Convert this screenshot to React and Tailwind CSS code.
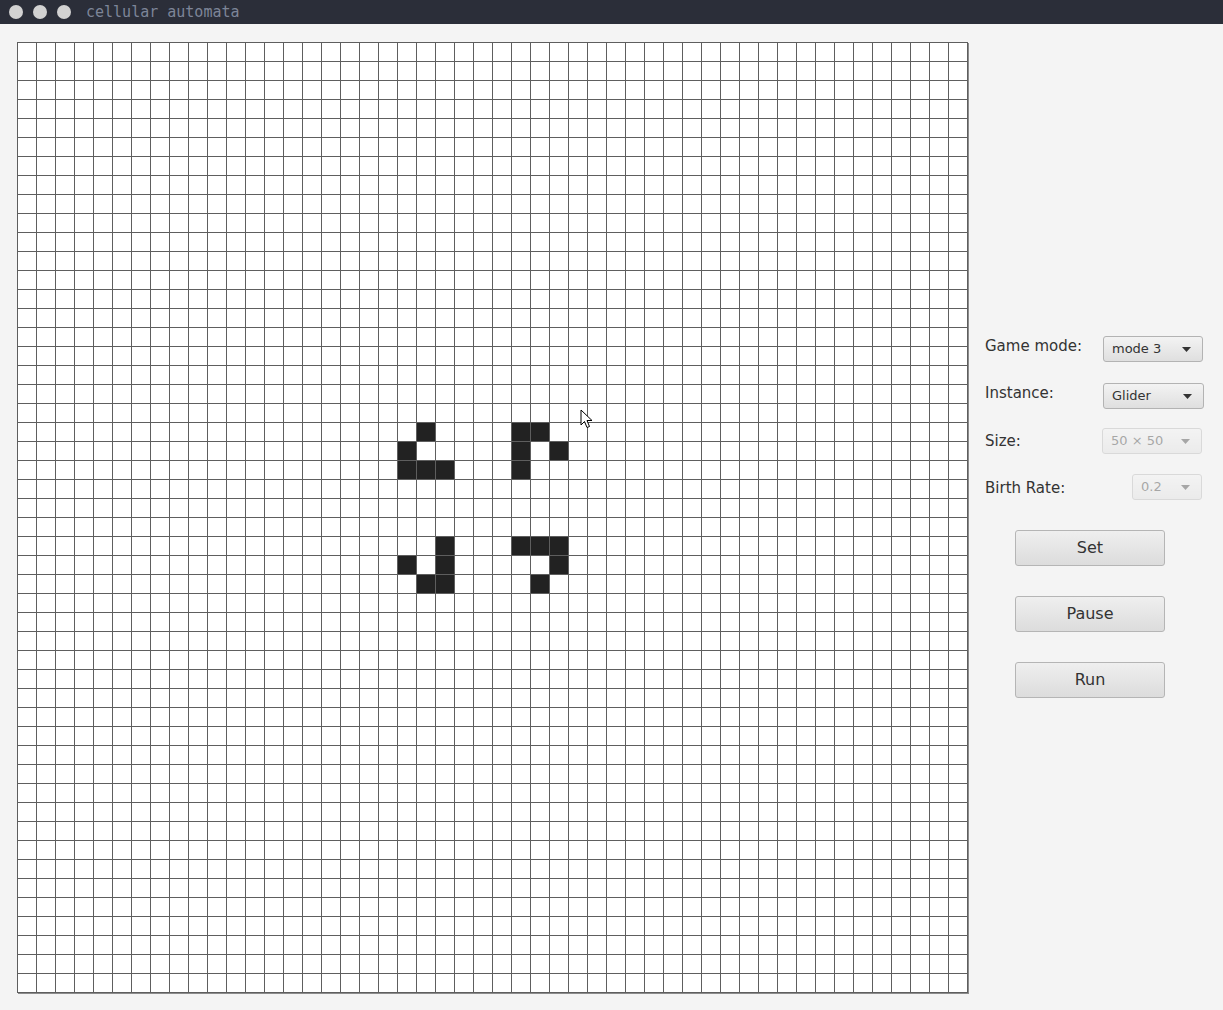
import React from "react";

const ALIVE = new Set([
  "20,21", "21,20", "22,20", "22,21", "22,22",
  "20,26", "20,27", "21,26", "21,28", "22,26",
  "26,22", "27,20", "27,22", "28,21", "28,22",
  "26,26", "26,27", "26,28", "27,28", "28,27",
]);

function Combo({ label, width, disabled }) {
  return (
    <div
      className={
        "relative h-[26px] rounded-[3px] border border-[#b3b3b3] bg-linear-to-b from-[#f3f3f3] to-[#dfdfdf] text-[13px] leading-[24px] text-[#333] pl-[8px] " +
        (disabled ? "opacity-40" : "")
      }
      style={{ width }}
    >
      {label}
      <svg className="absolute right-[11px] top-[10px]" width="9" height="5" viewBox="0 0 9 5">
        <path d="M0 0 L9 0 L4.5 5 Z" fill="#333" />
      </svg>
    </div>
  );
}

function Btn({ children }) {
  return (
    <div className="h-[36px] w-[150px] rounded-[3px] border border-[#b5b5b5] bg-linear-to-b from-[#efefef] to-[#dcdcdc] text-center text-[16px] leading-[34px] text-[#333]">
      {children}
    </div>
  );
}

export default function App() {
  const cells = [];
  for (let r = 0; r < 50; r++) {
    for (let c = 0; c < 50; c++) {
      const alive = ALIVE.has(r + "," + c);
      cells.push(
        <div key={r * 50 + c} className={alive ? "bg-[#222]" : "bg-white"} />
      );
    }
  }
  return (
    <div className="relative w-[1223px] h-[1010px] bg-[#f4f4f4] overflow-hidden" style={{ fontFamily: '"DejaVu Sans", sans-serif' }}>
      <div className="h-[24px] bg-[#2b2e39] flex items-center pl-[9px]">
        <div className="w-[14px] h-[14px] rounded-full bg-[#d2d2d2]" />
        <div className="w-[14px] h-[14px] rounded-full bg-[#d2d2d2] ml-[10px]" />
        <div className="w-[14px] h-[14px] rounded-full bg-[#d2d2d2] ml-[10px]" />
        <div
          className="ml-[15px] text-[15px] text-[#7d8598] leading-none"
          style={{ fontFamily: '"DejaVu Sans Mono", monospace' }}
        >
          cellular automata
        </div>
      </div>
      <div className="flex pt-[18px] pl-[17px]">
        <div className="grid grid-cols-[repeat(50,18px)] grid-rows-[repeat(50,18px)] gap-px p-px bg-[#5e5e5e] w-[951px] h-[951px] shadow-[1px_1px_0_#8c8c8c]">
          {cells}
        </div>
        <div className="ml-[17px] w-[219px] pt-[294px] text-[15px] text-[#333]">
          <div className="flex justify-between h-[26px]">
            <div className="leading-[20px]">Game mode:</div>
            <div className="mr-[1px]"><Combo label="mode 3" width={100} /></div>
          </div>
          <div className="flex justify-between h-[26px] mt-[21px]">
            <div className="leading-[20px]">Instance:</div>
            <Combo label="Glider" width={101} />
          </div>
          <div className="flex justify-between h-[26px] mt-[19px]">
            <div className="leading-[26px]">Size:</div>
            <div className="mr-[2px]"><Combo label="50 × 50" width={100} disabled /></div>
          </div>
          <div className="flex justify-between h-[26px] mt-[20px]">
            <div className="leading-[28px]">Birth Rate:</div>
            <div className="mr-[2px]"><Combo label="0.2" width={70} disabled /></div>
          </div>
          <div className="ml-[30px] mt-[30px] flex flex-col gap-[30px]">
            <Btn>Set</Btn>
            <Btn>Pause</Btn>
            <Btn>Run</Btn>
          </div>
        </div>
      </div>
      <svg className="absolute left-[580px] top-[409px]" width="14" height="21" viewBox="0 0 14 21">
        <path d="M1 1 L1 16 L4.5 12.5 L7 18.5 L9.5 17.5 L7 11.5 L12 11.5 Z" fill="#fff" stroke="#000" strokeWidth="1" strokeLinejoin="round" />
      </svg>
    </div>
  );
}
